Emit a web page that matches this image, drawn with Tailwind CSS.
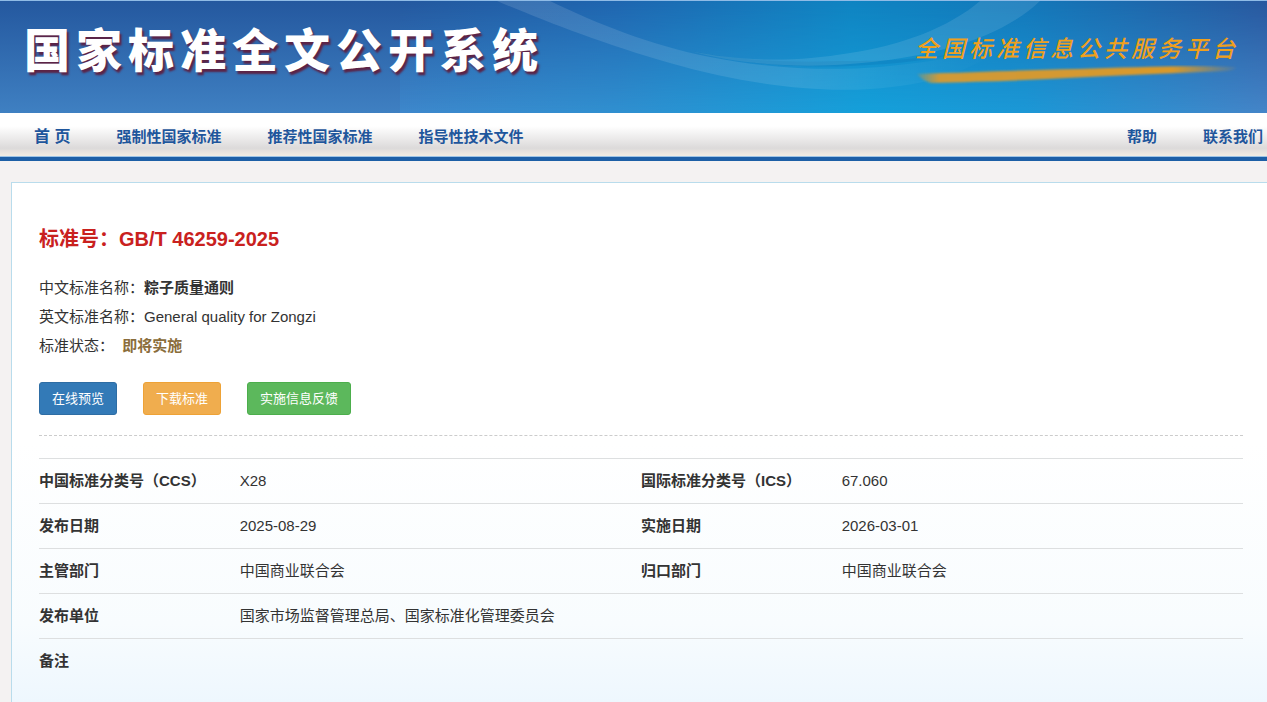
<!DOCTYPE html>
<html lang="zh-CN">
<head>
    <meta charset="UTF-8" />
    <meta name="viewport" content="width=device-width, initial-scale=1.0" />
    <title>国家标准全文公开系统</title>
    <script src="https://cdn.jsdelivr.net/npm/@tailwindcss/browser@4"></script>
</head>
<body class="flex min-h-screen flex-col overflow-x-hidden bg-[#f4f2f2] font-['Liberation_Sans','Noto_Sans_CJK_SC',sans-serif] text-[15px] text-[#333]">

    <header class="relative flex h-[113px] items-start justify-between border-t border-[#8fbbe6] pl-6 pr-7">
        <!-- banner background -->
        <svg class="absolute inset-0 h-full w-full" viewBox="0 0 1267 112" preserveAspectRatio="none" aria-hidden="true">
            <defs>
                <linearGradient id="left" x1="0" y1="0" x2="0" y2="1">
                    <stop offset="0" stop-color="#24589f" />
                    <stop offset="1" stop-color="#3f80c2" />
                </linearGradient>
                <linearGradient id="top" x1="0" y1="0" x2="1" y2="0">
                    <stop offset="0" stop-color="#24589f" />
                    <stop offset="0.25" stop-color="#1f66b0" />
                    <stop offset="0.52" stop-color="#0f84c2" />
                    <stop offset="0.72" stop-color="#1378ba" />
                    <stop offset="1" stop-color="#28589f" />
                </linearGradient>
                <linearGradient id="bottom" x1="0" y1="0" x2="1" y2="0">
                    <stop offset="0" stop-color="#3e88cc" />
                    <stop offset="0.25" stop-color="#3090d0" />
                    <stop offset="0.54" stop-color="#15a0da" />
                    <stop offset="0.72" stop-color="#1c98d6" />
                    <stop offset="1" stop-color="#4585c8" />
                </linearGradient>
                <linearGradient id="fade" x1="0" y1="0" x2="0" y2="1">
                    <stop offset="0" stop-color="#000" />
                    <stop offset="1" stop-color="#fff" />
                </linearGradient>
                <linearGradient id="tail" x1="0" y1="0" x2="1" y2="0">
                    <stop offset="0" stop-color="#fff" stop-opacity="0.12" />
                    <stop offset="0.6" stop-color="#fff" stop-opacity="0.1" />
                    <stop offset="1" stop-color="#fff" stop-opacity="0" />
                </linearGradient>
                <mask id="down"><rect x="400" width="867" height="112" fill="url(#fade)" /></mask>
            </defs>
            <rect width="401" height="112" fill="url(#left)" />
            <rect x="400" width="867" height="112" fill="url(#top)" />
            <rect x="400" width="867" height="112" fill="url(#bottom)" mask="url(#down)" />
            <path d="M497 0 H550 C600 24 650 44 710 56 C770 68 830 70 880 66 C925 62 960 55 1000 48 C970 70 930 84 870 88 C810 92 740 82 670 62 C600 42 545 20 497 0 Z" fill="url(#tail)" />
            <path d="M690 50 C740 64 800 67 850 65 C900 63 940 58 975 48 C930 60 870 60 840 60 C790 62 740 60 690 50 Z" fill="#0b78b8" fill-opacity="0.35" />
            <path d="M690 50 C740 60 790 62 850 52 C900 45 950 26 980 0 H1040 C1000 38 930 57 850 63 C800 67 740 64 690 50 Z" fill="#fff" fill-opacity="0.1" />
        </svg>
        <h1 class="relative mt-[18px] text-[46px] leading-[64px] font-black tracking-[6px] whitespace-nowrap text-white [text-shadow:2px_3px_2px_#5c2346]">国家标准全文公开系统</h1>
        <a href="#" class="relative mt-8 block whitespace-nowrap">
            <span class="block text-[23px] leading-8 font-medium tracking-[4px] text-[#f0a01c] italic">全国标准信息公共服务平台</span>
            <svg class="block h-5 w-full" viewBox="0 0 318 20" preserveAspectRatio="none" aria-hidden="true">
                <defs>
                    <linearGradient id="stroke" x1="0" y1="0" x2="1" y2="0">
                        <stop offset="0" stop-color="#d9992b" stop-opacity="0.2" />
                        <stop offset="0.07" stop-color="#cf9a38" />
                        <stop offset="0.8" stop-color="#d9992b" />
                        <stop offset="1" stop-color="#d9992b" stop-opacity="0.1" />
                    </linearGradient>
                    <filter id="soft"><feGaussianBlur stdDeviation="1.2" /></filter>
                </defs>
                <path d="M2 9 C60 7 110 5 160 4 C215 2 270 0 314 2 C316 4 312 5 306 6 C240 9 180 11 130 14 C90 16 50 17 16 18 C8 16 6 13 2 9 Z" fill="url(#stroke)" filter="url(#soft)" />
            </svg>
        </a>
    </header>

    <nav class="flex h-12 items-center justify-between border-b-4 border-[#1c5fa6] bg-linear-to-b from-white from-30% via-[#dcdada] via-80% to-[#f3efe4] pt-1 pr-1 pl-[34px] font-bold whitespace-nowrap text-[#1f569c] shadow-[inset_0_-1px_0_#9cc4e6]">
        <div class="flex gap-[46px]">
            <a href="#" class="text-base">首 页</a>
            <a href="#" class="leading-6">强制性国家标准</a>
            <a href="#" class="leading-6">推荐性国家标准</a>
            <a href="#" class="leading-6">指导性技术文件</a>
        </div>
        <div class="flex gap-[46px]">
            <a href="#">帮助</a>
            <a href="#">联系我们</a>
        </div>
    </nav>

    <main class="mt-[21px] ml-[11px] flex-1 border-t border-l border-[#b9dcec] bg-linear-to-b from-white from-50% via-[#f8fcfe] via-85% to-[#eef7fe] pt-10 pr-6 pl-[27px]">
        <h2 class="text-xl leading-8 font-bold text-[#c9211e]">标准号：GB/T 46259-2025</h2>

        <div class="mt-[18px] leading-[29px]">
            <p>中文标准名称：<b>粽子质量通则</b></p>
            <p>英文标准名称：General quality for Zongzi</p>
            <p>标准状态： <b class="ml-1 text-[#8a6d3b]">即将实施</b></p>
        </div>

        <div class="mt-[22px] flex gap-[26px] text-[13px] leading-[31px] text-white">
            <button type="button" class="rounded-[3px] border border-[#2e6da4] bg-[#337ab7] px-3">在线预览</button>
            <button type="button" class="rounded-[3px] border border-[#eea236] bg-[#f0ad4e] px-3">下载标准</button>
            <button type="button" class="rounded-[3px] border border-[#4cae4c] bg-[#5cb85c] px-3">实施信息反馈</button>
        </div>

        <div class="mt-5 border-t border-dashed border-[#ccc]"></div>

        <table class="mt-[22px] w-full table-fixed text-left">
            <colgroup>
                <col class="w-1/6" />
                <col class="w-1/3" />
                <col class="w-1/6" />
                <col class="w-1/3" />
            </colgroup>
            <tbody>
                <tr class="h-[45px] border-t border-[#dddfe0]">
                    <th scope="row">中国标准分类号（CCS）</th>
                    <td>X28</td>
                    <th scope="row">国际标准分类号（ICS）</th>
                    <td>67.060</td>
                </tr>
                <tr class="h-[45px] border-t border-[#dddfe0]">
                    <th scope="row">发布日期</th>
                    <td>2025-08-29</td>
                    <th scope="row">实施日期</th>
                    <td>2026-03-01</td>
                </tr>
                <tr class="h-[45px] border-t border-[#dddfe0]">
                    <th scope="row">主管部门</th>
                    <td>中国商业联合会</td>
                    <th scope="row">归口部门</th>
                    <td>中国商业联合会</td>
                </tr>
                <tr class="h-[45px] border-t border-[#dddfe0]">
                    <th scope="row">发布单位</th>
                    <td colspan="3">国家市场监督管理总局、国家标准化管理委员会</td>
                </tr>
                <tr class="h-[45px] border-t border-[#dddfe0]">
                    <th scope="row">备注</th>
                    <td colspan="3"></td>
                </tr>
            </tbody>
        </table>
    </main>

</body>
</html>
